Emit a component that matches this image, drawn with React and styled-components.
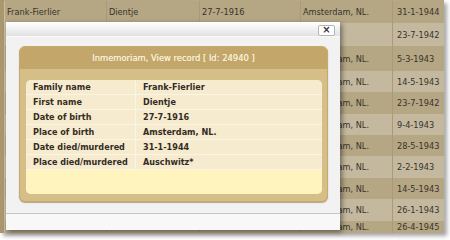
import React from "react";
import styled, { createGlobalStyle } from "styled-components";

const bgRows = [
  { h: 22, cells: ["Frank-Fierlier", "Dientje", "27-7-1916", "Amsterdam, NL.", "31-1-1944"] },
  { h: 23, cells: ["", "", "", "", "23-7-1942"] },
  { h: 25, cells: ["", "", "", "Amsterdam, NL.", "5-3-1943"] },
  { h: 21, cells: ["", "", "", "Amsterdam, NL.", "14-5-1943"] },
  { h: 22, cells: ["", "", "", "Amsterdam, NL.", "23-7-1942"] },
  { h: 21, cells: ["", "", "", "Amsterdam, NL.", "9-4-1943"] },
  { h: 21, cells: ["", "", "", "Amsterdam, NL.", "28-5-1943"] },
  { h: 22, cells: ["", "", "", "Amsterdam, NL.", "2-2-1943"] },
  { h: 21, cells: ["", "", "", "Amsterdam, NL.", "14-5-1943"] },
  { h: 22, cells: ["", "", "", "Amsterdam, NL.", "26-1-1943"] },
  { h: 12, cells: ["", "", "", "Amsterdam, NL.", "26-4-1945"] },
];

const record = [
  ["Family name", "Frank-Fierlier"],
  ["First name", "Dientje"],
  ["Date of birth", "27-7-1916"],
  ["Place of birth", "Amsterdam, NL."],
  ["Date died/murdered", "31-1-1944"],
  ["Place died/murdered", "Auschwitz*"],
];

function App() {
  return (
    <>
      <GlobalStyle />
      <Page>
        <ListTable>
          {bgRows.map((row, i) => (
            <ListRow key={i} $dark={i % 2 === 0} $h={row.h}>
              {row.cells.map((c, j) => (
                <ListCell key={j}>{c}</ListCell>
              ))}
            </ListRow>
          ))}
        </ListTable>

        <Dialog>
          <TitleBar>
            <CloseButton>×</CloseButton>
          </TitleBar>
          <DialogBody>
            <Panel>
              <PanelHeader>Inmemoriam, View record [ Id: 24940 ]</PanelHeader>
              <PanelBody>
                <RecordBox>
                  {record.map(([label, value]) => (
                    <RecordRow key={label}>
                      <RecordLabel>{label}</RecordLabel>
                      <RecordValue>{value}</RecordValue>
                    </RecordRow>
                  ))}
                  <RecordFiller />
                </RecordBox>
              </PanelBody>
            </Panel>
          </DialogBody>
          <ButtonPane />
        </Dialog>
      </Page>
    </>
  );
}

export default App;

const GlobalStyle = createGlobalStyle`
  html, body {
    margin: 0;
    padding: 0;
    background: #ffffff;
  }
  body {
    font-family: "DejaVu Sans", Verdana, sans-serif;
  }
`;

const Page = styled.div`
  position: relative;
  width: 450px;
  height: 240px;
  overflow: hidden;
  background: #ffffff;
`;

const ListTable = styled.div`
  display: flex;
  flex-direction: column;
  width: 440px;
  padding-top: 1px;
  border-left: 4px solid #a8976f;
  background: #b6a785;
  box-shadow: 3px 3px 4px rgba(0, 0, 0, 0.35);
`;

const ListRow = styled.div`
  display: grid;
  grid-template-columns: 102px 93px 101px 92px 1fr;
  height: ${(p) => p.$h}px;
  background: ${(p) => (p.$dark ? "#b5a684" : "#c4b99f")};
  border-left: 1px solid #cbbf9f;
`;

const ListCell = styled.div`
  display: flex;
  align-items: center;
  padding-left: 2px;
  border-right: 1px solid #a99a78;
  font-size: 8.2px;
  color: #37342b;
  white-space: nowrap;
  overflow: hidden;

  &:last-child {
    border-right: none;
    padding-left: 4px;
  }
`;

const Dialog = styled.div`
  position: absolute;
  left: 6px;
  top: 22px;
  width: 334px;
  height: 208px;
  display: flex;
  flex-direction: column;
  background: #f2f2f2;
  box-shadow: 2px 2px 5px rgba(0, 0, 0, 0.45);
`;

const TitleBar = styled.div`
  height: 15px;
  display: flex;
  align-items: center;
  justify-content: flex-end;
  padding-right: 5px;
  background: linear-gradient(#ffffff, #e2e2e2);
  border-bottom: 1px solid #f8f8f8;
`;

const CloseButton = styled.div`
  width: 15px;
  height: 9px;
  margin-top: 2px;
  display: flex;
  align-items: center;
  justify-content: center;
  background: #ffffff;
  border: 1px solid #b4b4b4;
  border-radius: 2px;
  font-size: 10px;
  font-weight: bold;
  line-height: 1;
  color: #333333;
`;

const DialogBody = styled.div`
  flex: 1;
  padding: 9px 12px 11px 13px;
  border-bottom: 1px solid #c6c6c6;
`;

const Panel = styled.div`
  display: flex;
  flex-direction: column;
  height: 154px;
  border-radius: 6px;
  background: #d5be87;
  border: 1px solid #c5a96d;
  box-shadow: 0 1px 1px rgba(120, 95, 40, 0.5);
  overflow: hidden;
`;

const PanelHeader = styled.div`
  height: 22px;
  display: flex;
  align-items: center;
  justify-content: center;
  background: #c2a66a;
  color: #f8efd4;
  font-size: 8.4px;
  text-shadow: 0 0 0.4px #f8efd4;
`;

const PanelBody = styled.div`
  flex: 1;
  padding: 11px 5px 7px 6px;
  display: flex;
`;

const RecordBox = styled.div`
  flex: 1;
  display: flex;
  flex-direction: column;
  border-radius: 5px;
  overflow: hidden;
  background: #fff4bd;
`;

const RecordRow = styled.div`
  display: grid;
  grid-template-columns: 110px 1fr;
  height: 15px;
  background: #f6ebcf;
  border-bottom: 1px solid #fbf5e4;
  box-sizing: border-box;
`;

const RecordLabel = styled.div`
  display: flex;
  align-items: center;
  padding-left: 7px;
  border-right: 1px solid #fbf5e4;
  font-size: 8.1px;
  font-weight: bold;
  color: #332c1f;
  white-space: nowrap;
`;

const RecordValue = styled(RecordLabel)`
  border-right: none;
  padding-left: 7px;
`;

const RecordFiller = styled.div`
  flex: 1;
  background: #fff4bd;
`;

const ButtonPane = styled.div`
  height: 17px;
  background: #f8f8f8;
`;
